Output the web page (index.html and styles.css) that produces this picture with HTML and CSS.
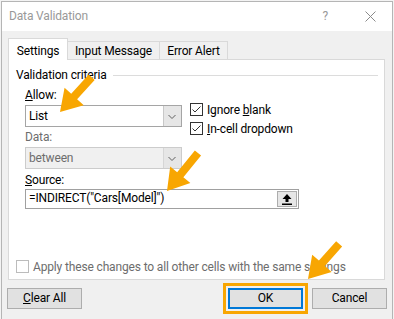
FILE: index.html
```html
<!DOCTYPE html>
<html lang="en">
<head>
  <meta charset="UTF-8">
  <title>Data Validation</title>
  <link rel="stylesheet" href="styles.css">
</head>
<body>
<div class="dialog">
  <div class="titlebar">
    <span class="title">Data Validation</span>
    <span class="help">?</span>
    <svg class="close" width="11" height="11" viewBox="0 0 11 11">
      <path d="M0.5 0.5 L10.5 10.5 M10.5 0.5 L0.5 10.5" stroke="#8a8a8a" stroke-width="1"/>
    </svg>
  </div>
  <div class="body">
    <div class="tabs">
      <div class="tab active">Settings</div>
      <div class="tab">Input Message</div>
      <div class="tab">Error Alert</div>
    </div>
    <div class="pane">
      <div class="group-title"><span>Validation criteria</span><span class="rule"></span></div>
      <div class="criteria">
        <div class="fields">
          <div class="field-label"><u>A</u>llow:</div>
          <div class="combo">
            <span class="combo-text">List</span>
            <span class="combo-btn">
              <svg width="17" height="20" viewBox="0 0 17 20"><path d="M4.5 9 L8 12.5 L11.5 9" fill="none" stroke="#606060"/></svg>
            </span>
          </div>
          <div class="field-label disabled">Data:</div>
          <div class="combo disabled">
            <span class="combo-text">between</span>
            <span class="combo-btn">
              <svg width="17" height="20" viewBox="0 0 17 20"><path d="M4.5 9 L8 12.5 L11.5 9" fill="none" stroke="#606060"/></svg>
            </span>
          </div>
        </div>
        <div class="checks">
          <div class="check">
            <span class="box"><svg width="11" height="11" viewBox="0 0 11 11"><path d="M1.5 5.5 L4 8 L9.5 2.5" fill="none" stroke="#333"/></svg></span>
            <span>Ignore <u>b</u>lank</span>
          </div>
          <div class="check">
            <span class="box"><svg width="11" height="11" viewBox="0 0 11 11"><path d="M1.5 5.5 L4 8 L9.5 2.5" fill="none" stroke="#333"/></svg></span>
            <span><u>I</u>n-cell dropdown</span>
          </div>
        </div>
      </div>
      <div class="field-label source-label"><u>S</u>ource:</div>
      <div class="source">
        <span class="source-text">=INDIRECT("Cars[Model]")</span>
        <span class="source-btn">
          <svg width="10" height="11" viewBox="0 0 10 11">
            <path d="M5 0 L9.5 5 L6.5 5 L6.5 8 L3.5 8 L3.5 5 L0.5 5 Z" fill="#000"/>
            <rect x="0" y="9.5" width="10" height="1.5" fill="#000"/>
          </svg>
        </span>
      </div>
      <div class="check apply">
        <span class="box"></span>
        <span>Apply these changes to all other cells with the same settings</span>
      </div>
    </div>
    <div class="buttons">
      <button class="btn"><u>C</u>lear All</button>
      <span class="spacer"></span>
      <button class="btn default">OK</button>
      <button class="btn">Cancel</button>
    </div>
  </div>
</div>

<!-- callout arrows drawn over the dialog -->
<svg class="arrows" width="394" height="319" viewBox="0 0 394 319">
  <g fill="#f8a602">
    <polygon transform="translate(60,112) rotate(132.4)" points="-47,-4 -21,-4 -21,-13 0,0 -21,13 -21,4 -47,4"/>
    <polygon transform="translate(167,191) rotate(129.2)" points="-49,-4 -21,-4 -21,-13 0,0 -21,13 -21,4 -49,4"/>
    <polygon transform="translate(308,279) rotate(131.5)" points="-47,-4 -21,-4 -21,-13 0,0 -21,13 -21,4 -47,4"/>
  </g>
</svg>
</body>
</html>
```

FILE: styles.css
```css
* {
  box-sizing: border-box;
}
html {
  background: #f3f3f3;
}
body {
  margin: 0;
  position: relative;
  width: 394px;
  height: 319px;
  overflow: hidden;
  font-family: Roboto, "Noto Sans", sans-serif;
  font-size: 12px;
  line-height: 16px;
  letter-spacing: -0.15px;
  color: #000;
}
.dialog {
  margin: 1px 0 0 1px;
  width: 392px;
  border: 1px solid #b5b5b5;
  border-bottom: none;
  background: #f0f0f0;
}
.titlebar {
  height: 29px;
  background: #fff;
  display: flex;
  align-items: flex-start;
  padding: 6px 16px 0 7px;
  color: #999;
}
.title {
  flex: 1;
}
.help {
  margin-right: 37px;
}
.close {
  margin-top: 3px;
}
.body {
  padding: 7px 7px 10px 6px;
}
.tabs {
  display: flex;
  align-items: flex-start;
  height: 22px;
  margin-bottom: -1px;
  position: relative;
  z-index: 1;
}
.tab {
  margin-top: 3px;
  height: 18px;
  padding-top: 1px;
  border: 1px solid #d9d9d9;
  border-bottom: none;
  background: #f0f0f0;
  text-align: center;
  margin-left: -1px;
}
.tab:nth-child(2) {
  width: 93px;
}
.tab:nth-child(3) {
  width: 69px;
}
.tab.active {
  margin: 0;
  width: 60px;
  height: 22px;
  padding-top: 4px;
  background: #fff;
}
.pane {
  height: 221px;
  border: 1px solid #d9d9d9;
  background: #fff;
  padding: 7px 6px 0 7px;
}
.group-title {
  display: flex;
  align-items: center;
}
.group-title .rule {
  flex: 1;
  height: 1px;
  background: #dcdcdc;
  margin-left: 6px;
}
.criteria {
  display: flex;
  gap: 8px;
  margin-left: 9px;
}
.fields {
  width: 157px;
}
.field-label {
  margin-top: 4px;
}
.field-label.disabled {
  margin-top: 2px;
  color: #6d6d6d;
}
.combo {
  margin-top: 2px;
  height: 22px;
  display: flex;
  border: 1px solid #a5a5a5;
  background: #fff;
}
.combo-text {
  flex: 1;
  padding: 1px 0 0 3px;
  line-height: 18px;
}
.combo-btn {
  width: 18px;
  background: #e6e6e6;
  border-left: 1px solid #c8c8c8;
}
.combo-btn svg {
  display: block;
}
.combo.disabled {
  border-color: #cccccc;
  background: #f0f0f0;
  color: #6d6d6d;
}
.combo.disabled .combo-btn {
  background: #e6e6e6;
  border-left-color: #d6d6d6;
}
.checks {
  margin-top: 17px;
}
.check {
  display: flex;
  align-items: center;
  height: 19px;
}
.box {
  width: 13px;
  height: 13px;
  border: 1px solid #333;
  background: #fff;
  margin-right: 4px;
}
.box svg {
  display: block;
}
.source-label {
  margin: 3px 0 0 9px;
}
.source {
  margin: 1px 0 0 9px;
  width: 274px;
  height: 20px;
  display: flex;
  border: 1px solid #a0a0a0;
}
.source-text {
  flex: 1;
  padding-left: 3px;
  line-height: 17px;
}
.source-btn {
  width: 20px;
  margin: 1px 1px 1px 0;
  background: #e6e6e6;
  border: 1px solid #adadad;
  display: flex;
  align-items: center;
  justify-content: center;
}
.apply {
  margin-top: 48px;
  color: #6d6d6d;
}
.apply .box {
  border-color: #bcbcbc;
}
.buttons {
  display: flex;
  gap: 9px;
  margin: 8px -2px 0 -1px;
}
.spacer {
  flex: 1;
}
.btn {
  width: 75px;
  height: 21px;
  font: inherit;
  letter-spacing: inherit;
  line-height: 17px;
  padding: 0;
  color: #000;
  background: #e1e1e1;
  border: 1px solid #adadad;
}
.btn.default {
  border: 2px solid #0078d7;
  outline: 3px solid #f8a602;
  outline-offset: 2px;
}
.arrows {
  position: absolute;
  top: 0;
  left: 0;
  pointer-events: none;
}
```
